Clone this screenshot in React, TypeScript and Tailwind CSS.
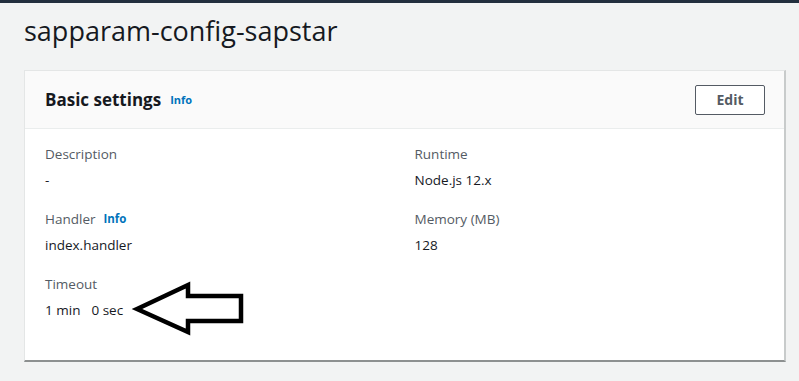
import React from 'react';

const font = { fontFamily: '"Open Sans", "Noto Sans", Arial, sans-serif' };

function Field({ label, value, info }: { label: string; value: React.ReactNode; info?: boolean }) {
  return (
    <div className="flex flex-col">
      <div className="flex items-center gap-2 h-[20px] text-[13.5px] leading-[20px] text-[#545b64]">
        <span>{label}</span>
        {info && <span className="text-[11.5px] font-bold text-[#0073bb]">Info</span>}
      </div>
      <div className="mt-[6px] h-[20px] text-[13.5px] leading-[20px] text-[#16191f] whitespace-pre">{value}</div>
    </div>
  );
}

export default function App() {
  return (
    <div className="relative w-[799px] h-[381px] overflow-hidden bg-[#f2f3f3]" style={font}>
      <div className="h-[3px] bg-[#232f3e]" />
      <h1 className="pl-[24px] pt-[8px] h-[67px] text-[27px] leading-[40px] text-[#16191f]">sapparam-config-sapstar</h1>

      <div className="ml-[24px] w-[762px] bg-white border border-[#e4e6e6] border-b-[#8d9090] border-r-[#c8cbcb] border-b-2 border-r-2">
        <div className="h-[58px] flex items-center justify-between pl-[20px] pr-[19px] bg-[#fafafa] border-b border-[#eaeded]">
          <div className="flex items-center gap-[9px]">
            <span className="text-[17px] font-bold text-[#16191f]">Basic settings</span>
            <span className="text-[11px] font-bold text-[#0073bb] mt-[2px]">Info</span>
          </div>
          <button type="button" className="w-[70px] h-[30px] rounded-[2px] border border-[#545b64] bg-white text-[14px] font-bold text-[#545b64]">Edit</button>
        </div>

        <div className="grid grid-cols-2 pl-[20px] pt-[15px] pb-[40px]">
          <div className="flex flex-col gap-[19px]">
            <Field label="Description" value="-" />
            <Field label="Handler" value="index.handler" info />
            <Field
              label="Timeout"
              value={
                <span>
                  1 min<span className="ml-[11px]">0 sec</span>
                </span>
              }
            />
          </div>
          <div className="flex flex-col gap-[19px]">
            <Field label="Runtime" value="Node.js 12.x" />
            <Field label="Memory (MB)" value="128" />
          </div>
        </div>
      </div>

      <div className="ml-[24px] mt-[19px] w-[762px] h-[10px] bg-white border-t border-[#e4e6e6]" />

      <svg className="absolute left-0 top-0" width="799" height="381" viewBox="0 0 799 381">
        <polygon
          points="137,309 188,285 188,296 241,296 241,321 188,321 188,332"
          fill="none"
          stroke="#000"
          strokeWidth="4.5"
          strokeLinejoin="miter"
        />
      </svg>
    </div>
  );
}
